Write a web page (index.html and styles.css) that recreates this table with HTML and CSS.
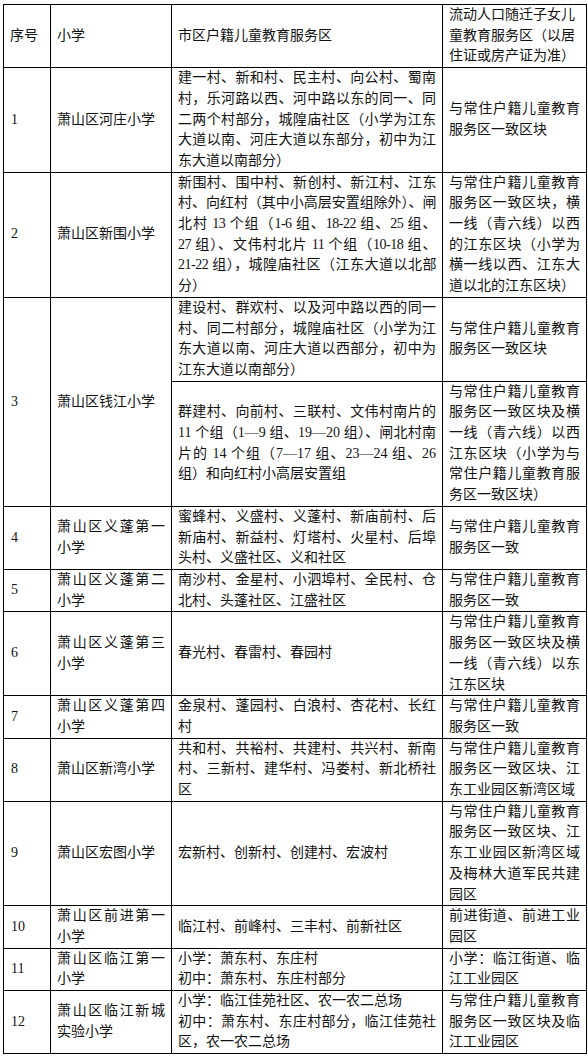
FILE: index.html
```html
<!DOCTYPE html>
<html lang="zh-CN">
<head>
<meta charset="utf-8">
<title>萧山区小学服务区</title>
<link rel="stylesheet" href="styles.css">
</head>
<body>
<table class="zone-table">
  <colgroup>
    <col class="c-no">
    <col class="c-school">
    <col class="c-area">
    <col class="c-migrant">
  </colgroup>
  <thead>
    <tr>
      <th>序号</th>
      <th>小学</th>
      <th>市区户籍儿童教育服务区</th>
      <th>流动人口随迁子女儿童教育服务区（以居住证或房产证为准）</th>
    </tr>
  </thead>
  <tbody>
    <tr>
      <td class="no">1</td>
      <td>萧山区河庄小学</td>
      <td>建一村、新和村、民主村、向公村、蜀南村，乐河路以西、河中路以东的同一、同二两个村部分，城隍庙社区（小学为江东大道以南、河庄大道以东部分，初中为江东大道以南部分）</td>
      <td>与常住户籍儿童教育服务区一致区块</td>
    </tr>
    <tr>
      <td class="no">2</td>
      <td>萧山区新围小学</td>
      <td class="tight"><span class="jl">新围村、围中村、新创村、新江村、江东</span><span class="jl">村、向红村（其中小高层安置组除外）、闸</span><span class="jl">北村 13 个组（1-6 组、18-22 组、25 组、</span><span class="jl">27 组）、文伟村北片 11 个组（10-18 组、</span><span class="jl">21-22 组），城隍庙社区（江东大道以北部</span><span class="line">分）</span></td>
      <td>与常住户籍儿童教育服务区一致区块，横一线（青六线）以西的江东区块（小学为横一线以西、江东大道以北的江东区块）</td>
    </tr>
    <tr>
      <td class="no" rowspan="2">3</td>
      <td rowspan="2">萧山区钱江小学</td>
      <td>建设村、群欢村、以及河中路以西的同一村、同二村部分，城隍庙社区（小学为江东大道以南、河庄大道以西部分，初中为江东大道以南部分）</td>
      <td>与常住户籍儿童教育服务区一致区块</td>
    </tr>
    <tr>
      <td>群建村、向前村、三联村、文伟村南片的 11 个组（1—9 组、19—20 组）、闸北村南片的 14 个组（7—17 组、23—24 组、26 组）和向红村小高层安置组</td>
      <td>与常住户籍儿童教育服务区一致区块及横一线（青六线）以西江东区块（小学为与常住户籍儿童教育服务区一致区块）</td>
    </tr>
    <tr>
      <td class="no">4</td>
      <td>萧山区义蓬第一小学</td>
      <td>蜜蜂村、义盛村、义蓬村、新庙前村、后新庙村、新益村、灯塔村、火星村、后埠头村、义盛社区、义和社区</td>
      <td>与常住户籍儿童教育服务区一致</td>
    </tr>
    <tr>
      <td class="no">5</td>
      <td>萧山区义蓬第二小学</td>
      <td>南沙村、金星村、小泗埠村、全民村、仓北村、头蓬社区、江盛社区</td>
      <td>与常住户籍儿童教育服务区一致</td>
    </tr>
    <tr>
      <td class="no">6</td>
      <td>萧山区义蓬第三小学</td>
      <td>春光村、春雷村、春园村</td>
      <td>与常住户籍儿童教育服务区一致区块及横一线（青六线）以东江东区块</td>
    </tr>
    <tr>
      <td class="no">7</td>
      <td>萧山区义蓬第四小学</td>
      <td>金泉村、蓬园村、白浪村、杏花村、长红村</td>
      <td>与常住户籍儿童教育服务区一致</td>
    </tr>
    <tr>
      <td class="no">8</td>
      <td>萧山区新湾小学</td>
      <td>共和村、共裕村、共建村、共兴村、新南村、三新村、建华村、冯娄村、新北桥社区</td>
      <td>与常住户籍儿童教育服务区一致区块、江东工业园区新湾区域</td>
    </tr>
    <tr>
      <td class="no">9</td>
      <td>萧山区宏图小学</td>
      <td>宏新村、创新村、创建村、宏波村</td>
      <td>与常住户籍儿童教育服务区一致区块、江东工业园区新湾区域及梅林大道军民共建园区</td>
    </tr>
    <tr>
      <td class="no">10</td>
      <td>萧山区前进第一小学</td>
      <td>临江村、前峰村、三丰村、前新社区</td>
      <td>前进街道、前进工业园区</td>
    </tr>
    <tr>
      <td class="no">11</td>
      <td>萧山区临江第一小学</td>
      <td><span class="line">小学：萧东村、东庄村</span><span class="line">初中：萧东村、东庄村部分</span></td>
      <td>小学：临江街道、临江工业园区</td>
    </tr>
    <tr>
      <td class="no">12</td>
      <td>萧山区临江新城实验小学</td>
      <td><span class="line">小学：临江佳苑社区、农一农二总场</span><span class="line">初中：萧东村、东庄村部分，临江佳苑社区，农一农二总场</span></td>
      <td>与常住户籍儿童教育服务区一致区块及临江工业园区</td>
    </tr>
  </tbody>
</table>
</body>
</html>
```

FILE: styles.css
```css
html, body {
  margin: 0;
  padding: 0;
  background: #ffffff;
}

body {
  padding: 4px 3px 0 3px;
}

.zone-table {
  width: 583px;
  table-layout: fixed;
  border-collapse: collapse;
  font-family: "Liberation Serif", "Noto Sans CJK SC", serif;
  font-size: 14px;
  line-height: 20.7px;
  color: #111111;
}

.c-no { width: 47px; }
.c-school { width: 121px; }
.c-area { width: 271px; }
.c-migrant { width: 144px; }

.zone-table th,
.zone-table td {
  border: 1px solid #000000;
  padding: 0 6px;
  vertical-align: middle;
  text-align: justify;
  font-weight: normal;
  word-break: break-all;
}

.zone-table th {
  text-align: left;
}

.zone-table td.no {
  padding-left: 7px;
  text-align: left;
}

.line {
  display: block;
}

.jl {
  display: block;
  white-space: nowrap;
  text-align: justify;
  text-align-last: justify;
}

.tight .jl {
  letter-spacing: -0.5px;
}
```
